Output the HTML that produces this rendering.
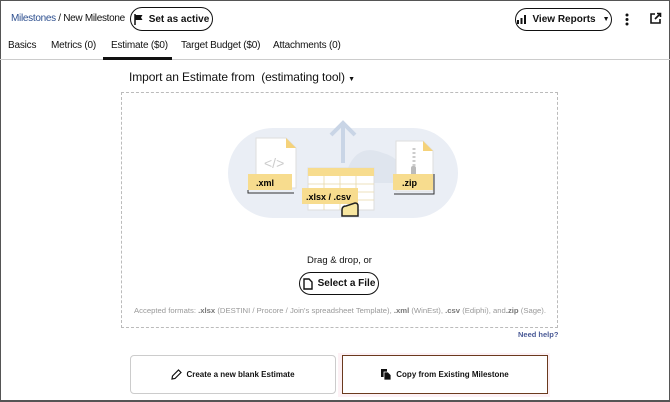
<!DOCTYPE html>
<html><head><meta charset="utf-8"><style>
*{box-sizing:border-box;margin:0;padding:0}
body{width:670px;height:402px;overflow:hidden;background:#fff;font-family:"Liberation Sans",sans-serif;color:#111;position:relative}
.frame{position:absolute;left:0;top:0;width:670px;height:402px;border:1px solid #555;border-bottom:2px solid #555}
.abs{position:absolute}
.pill{position:absolute;border:1.5px solid #111;border-radius:14px;font-weight:bold;font-size:10px;display:flex;align-items:center;justify-content:center;gap:5px;white-space:nowrap}
.tab{position:absolute;top:40px;font-size:10px;letter-spacing:-0.2px}
</style></head><body>
<div class="frame"></div>
<div class="abs" style="left:11px;top:13px;font-size:10px;letter-spacing:-0.3px"><span style="color:#2d4f8f">Milestones</span> / New Milestone</div>
<div class="pill" style="left:130px;top:7px;width:83px;height:24px"><svg width="10" height="11" viewBox="0 0 10 11"><path d="M1 0v11" stroke="#111" stroke-width="1.5"/><path d="M1.5 1h7l-1.5 2.5 1.5 2.5h-7z" fill="#111"/></svg>Set as active</div>
<div class="pill" style="left:515px;top:8px;width:97px;height:23px;font-size:10px"><svg width="10" height="9" viewBox="0 0 10 9"><rect x="0" y="5" width="2" height="4" fill="#111"/><rect x="3.5" y="3" width="2" height="6" fill="#111"/><rect x="7" y="0" width="2" height="9" fill="#111"/></svg>View Reports <span style="font-size:7px;margin-left:2px">▼</span></div>
<svg class="abs" style="left:625px;top:13px" width="4" height="13"><circle cx="2" cy="2" r="1.5" fill="#111"/><circle cx="2" cy="6.5" r="1.5" fill="#111"/><circle cx="2" cy="11" r="1.5" fill="#111"/></svg>
<svg class="abs" style="left:650px;top:12px" width="12" height="12" viewBox="0 0 12 12"><path d="M5 2H1v9h9V7" fill="none" stroke="#111" stroke-width="1.6"/><path d="M5 7L10 2M7 1.5h3.5V5" fill="none" stroke="#111" stroke-width="1.6"/></svg>
<div class="tab" style="left:8px">Basics</div>
<div class="tab" style="left:51px">Metrics (0)</div>
<div class="tab" style="left:111px">Estimate ($0)</div>
<div class="tab" style="left:181px">Target Budget ($0)</div>
<div class="tab" style="left:273px">Attachments (0)</div>
<div class="abs" style="left:0;top:59px;width:670px;height:1px;background:#ccc"></div>
<div class="abs" style="left:103px;top:57px;width:69px;height:2.5px;background:#111"></div>
<div class="abs" style="left:129px;top:70px;font-size:12px;letter-spacing:-0.1px;white-space:nowrap">Import an Estimate from &nbsp;(estimating tool) <span style="font-size:7px">▼</span></div>
<div class="abs" style="left:121px;top:92px;width:437px;height:236px;border:1px dashed #bbb"></div>
<svg class="abs" style="left:228px;top:108px" width="230" height="112" viewBox="0 0 230 112">
<rect x="0" y="20" width="230" height="90" rx="45" fill="#eaeef5"/>
<path d="M120 60 q10-25 35-15 q20 5 25 30 h-60z" fill="#dfe5ee"/>
<path d="M115 55V15M103 27l12-12 12 12" stroke="#c9d5e6" stroke-width="4" fill="none"/>
<path d="M28 30h30l10 10v40H28z" fill="#fff" stroke="#ddd"/><path d="M58 30v10h10z" fill="#f5d27a"/>
<text x="36" y="60" font-size="14" fill="#ccc" font-family="Liberation Sans">&lt;/&gt;</text>
<rect x="20" y="66" width="44" height="16" fill="#f7dc8e"/><text x="28" y="78" font-size="9" font-weight="bold" font-family="Liberation Sans">.xml</text>
<path d="M20 82v3h46" stroke="#333" fill="none"/>
<path d="M168 33h27l10 10v40h-37z" fill="#fff" stroke="#ddd"/><path d="M195 33v10h10z" fill="#f5d27a"/>
<path d="M186 40v20" stroke="#ccc" stroke-width="3" stroke-dasharray="2 2"/><rect x="183" y="58" width="5" height="10" rx="2" fill="#bbb"/>
<rect x="165" y="66" width="40" height="16" fill="#f7dc8e"/><text x="174" y="78" font-size="9" font-weight="bold" font-family="Liberation Sans">.zip</text>
<path d="M206 66v20h-40" stroke="#333" fill="none"/>
<rect x="80" y="60" width="66" height="42" fill="#fff" stroke="#ddd"/><rect x="80" y="60" width="66" height="8" fill="#f7dc8e"/>
<path d="M80 76h66M80 84h66M80 92h66M96 68v34M112 68v34M128 68v34" stroke="#e8d9a8" stroke-width="0.8"/>
<rect x="74" y="80" width="56" height="16" fill="#f7dc8e"/><text x="78" y="92" font-size="9" font-weight="bold" font-family="Liberation Sans">.xlsx / .csv</text>
<path d="M118 98 q-4 0-4 4v6h16v-10q0-3-3-3z" fill="#f7e6a0" stroke="#222" stroke-width="1.5"/>
</svg>
<div class="abs" style="left:0;width:679px;top:255px;text-align:center;font-size:9.5px">Drag &amp; drop, or</div>
<div class="pill" style="left:299px;top:272px;width:80px;height:23px;font-size:10px"><svg width="10" height="12" viewBox="0 0 10 12"><path d="M1 1h5l3 3v7H1z" fill="none" stroke="#111" stroke-width="1.4"/></svg>Select a File</div>
<div class="abs" style="left:134px;top:306px;font-size:7.7px;color:#999;white-space:nowrap">Accepted formats: <b style="color:#777">.xlsx</b> (DESTINI / Procore / Join's spreadsheet Template), <b style="color:#777">.xml</b> (WinEst), <b style="color:#777">.csv</b> (Ediphi), and<b style="color:#777">.zip</b> (Sage).</div>
<div class="abs" style="left:518px;top:330px;font-size:7.5px;font-weight:bold;color:#4a5a96">Need help?</div>
<div class="abs" style="left:130px;top:355px;width:206px;height:39px;border:1px solid #ccc;border-radius:4px;display:flex;align-items:center;justify-content:center;gap:4px;font-size:8px;font-weight:bold"><svg width="11" height="11" viewBox="0 0 11 11"><path d="M1 10l.5-3 6-6 2.5 2.5-6 6z" fill="none" stroke="#111" stroke-width="1.2"/></svg>Create a new blank Estimate</div>
<div class="abs" style="left:338px;top:353px;width:212px;height:44px;background:#fdf1f5"></div>
<div class="abs" style="left:342px;top:355px;width:206px;height:39px;border:1.5px solid #6b3a1e;background:#fff;display:flex;align-items:center;justify-content:center;gap:5px;font-size:8px;font-weight:bold"><svg width="10" height="11" viewBox="0 0 10 11"><rect x="0" y="0" width="6" height="8" fill="#111"/><path d="M3 3h4l3 3v5H3z" fill="#111" stroke="#fff" stroke-width="0.8"/></svg>Copy from Existing Milestone</div>
</body></html>
